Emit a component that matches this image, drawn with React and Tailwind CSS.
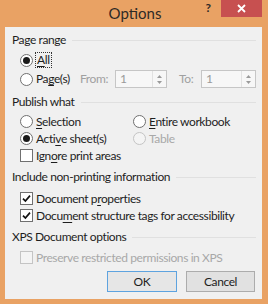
import React from "react";

const font = { fontFamily: 'Lato, "Noto Sans", sans-serif' };

function Heading({ children, mt }) {
  return (
    <div className={`flex items-center h-[18px] gap-[6px] ${mt}`}>
      <span className="whitespace-nowrap">{children}</span>
      <div className="flex-1 h-px bg-[#e0e0e0]" />
    </div>
  );
}

function Radio({ checked, disabled }) {
  return (
    <span
      className={`w-[13px] h-[13px] rounded-full border flex items-center justify-center shrink-0 ${
        disabled ? "border-[#c4c4c4] bg-[#f4f4f4]" : "border-[#707070] bg-white"
      }`}
    >
      {checked && <span className="w-[7px] h-[7px] rounded-full bg-[#1a1a1a]" />}
    </span>
  );
}

function Check({ checked, disabled }) {
  return (
    <span
      className={`w-[13px] h-[13px] border flex items-center justify-center shrink-0 ${
        disabled ? "border-[#c4c4c4] bg-[#f4f4f4]" : "border-[#707070] bg-white"
      }`}
    >
      {checked && (
        <svg width="9" height="9" viewBox="0 0 9 9">
          <path d="M1 4.6 L3.4 7 L8 1.6" fill="none" stroke="#111" strokeWidth="1.7" />
        </svg>
      )}
    </span>
  );
}

function U({ children }) {
  return <span className="underline underline-offset-2">{children}</span>;
}

function Spin({ w }) {
  return (
    <div className={`${w} h-[18px] border border-[#c6c6c6] bg-[#f7f7f7] flex items-stretch`}>
      <span className="flex-1 pl-[4px] leading-[16px] text-[#9a9a9a]">1</span>
      <div className="w-[14px] border-l border-[#e2e2e2] flex flex-col items-center justify-center gap-[3px]">
        <svg width="5" height="3" viewBox="0 0 5 3"><path d="M0 3 L2.5 0 L5 3Z" fill="#9a9a9a" /></svg>
        <svg width="5" height="3" viewBox="0 0 5 3"><path d="M0 0 L2.5 3 L5 0Z" fill="#9a9a9a" /></svg>
      </div>
    </div>
  );
}

export default function App() {
  return (
    <div className="w-[268px] h-[304px] bg-[#e9a264] flex flex-col whitespace-nowrap" style={font}>
      <div className="h-[27px] shrink-0 grid grid-cols-[1fr_auto_1fr]">
        <div />
        <div className="text-[15px] leading-[26px] text-[#2e2a26] pl-[2px]">Options</div>
        <div className="flex justify-end items-start">
          <span className="text-[12px] font-bold leading-[18px] text-[#2e2a26] mr-[10px] mt-[-1px]">?</span>
          <div className="w-[41px] h-[17px] bg-[#c75050] flex items-center justify-center mr-[6px]">
            <svg width="9" height="9" viewBox="0 0 9 9">
              <path d="M1 1 L8 8 M8 1 L1 8" stroke="#fff" strokeWidth="1.8" />
            </svg>
          </div>
        </div>
      </div>
      <div className="ml-[5px] mr-[6px] mb-[5px] flex-1 bg-[#f0f0f0] pl-[7px] pr-[6px] pt-[4px] flex flex-col text-[12px] tracking-[-0.4px] text-[#1e1e1e]">
        <Heading>Page range</Heading>
        <div className="flex items-center h-[18px] mt-[2px] pl-[8px]">
          <Radio checked />
          <span className="ml-[2px] px-[1px] border border-dotted border-[#333] leading-[14px]">
            <U>A</U>ll
          </span>
        </div>
        <div className="flex items-center h-[18px] mt-[1px] pl-[8px]">
          <Radio />
          <span className="ml-[3px] w-[44px]">
            Pa<U>g</U>e(s)
          </span>
          <span className="text-[#a0a0a0] w-[35px]">From:</span>
          <Spin w="w-[52px]" />
          <span className="text-[#a0a0a0] ml-[12px] w-[22px]">To:</span>
          <Spin w="w-[55px]" />
        </div>

        <Heading mt="mt-[5px]">Publish what</Heading>
        <div className="grid grid-cols-[113px_1fr] pl-[8px] mt-[2px]">
          <div className="flex items-center h-[17px]">
            <Radio />
            <span className="ml-[3px]"><U>S</U>election</span>
          </div>
          <div className="flex items-center h-[17px]">
            <Radio />
            <span className="ml-[3px]"><U>E</U>ntire workbook</span>
          </div>
          <div className="flex items-center h-[17px]">
            <Radio checked />
            <span className="ml-[3px]">Acti<U>v</U>e sheet(s)</span>
          </div>
          <div className="flex items-center h-[17px]">
            <Radio disabled />
            <span className="ml-[3px] text-[#a8a8a8]">Table</span>
          </div>
          <div className="flex items-center h-[17px] col-span-2">
            <Check />
            <span className="ml-[3px]">Ign<U>o</U>re print areas</span>
          </div>
        </div>

        <Heading mt="mt-[4px]">Include non-printing information</Heading>
        <div className="flex flex-col pl-[8px] mt-[4px]">
          <div className="flex items-center h-[17px]">
            <Check checked />
            <span className="ml-[3px]">Document p<U>r</U>operties</span>
          </div>
          <div className="flex items-center h-[17px]">
            <Check checked />
            <span className="ml-[3px]">Docu<U>m</U>ent structure tags for accessibility</span>
          </div>
        </div>

        <Heading mt="mt-[4px]">XPS Document options</Heading>
        <div className="flex items-center h-[17px] pl-[8px] mt-[3px]">
          <Check disabled />
          <span className="ml-[3px] text-[#a8a8a8]">Preserve restricted permissions in XPS</span>
        </div>

        <div className="flex justify-end gap-[9px] mt-[5px] pr-[1px]">
          <button className="w-[70px] h-[21px] border border-[#5ea3df] bg-[#e6e6e6] text-[#1e1e1e] leading-[18px]">
            OK
          </button>
          <button className="w-[69px] h-[21px] border border-[#acacac] bg-[#e1e1e1] text-[#1e1e1e] leading-[18px]">
            Cancel
          </button>
        </div>
      </div>
    </div>
  );
}
